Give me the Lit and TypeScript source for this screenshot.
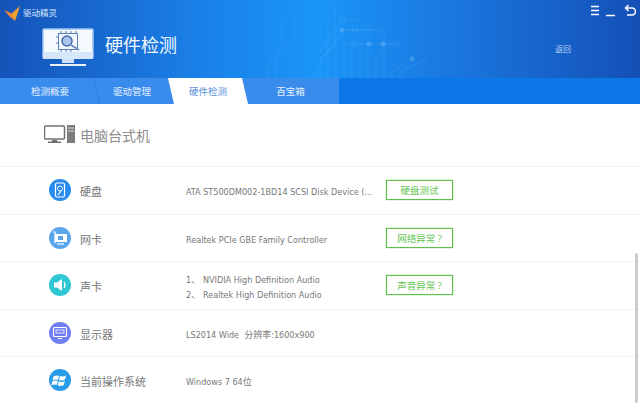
import { LitElement, html, css, svg } from "lit";
import { customElement } from "lit/decorators.js";

const circuit = svg`<g fill="none" stroke="#9ad2ff" stroke-opacity=".13" stroke-width="1">
<path d="M268 78V62L282 48V20"/><path d="M276 78V58L296 38V16"/><path d="M320 78V60L335 45V8"/><path d="M328 78V20"/><path d="M336 78V30"/><path d="M344 78V44H368"/><path d="M352 78V44"/><path d="M360 78V44"/><path d="M368 78V44H398"/><path d="M376 78V58L392 44"/><path d="M384 78V30H368"/><path d="M392 78V72L412 58"/><path d="M400 78V72L428 58"/><path d="M320 60L345 30H364"/><path d="M345 30H372"/><path d="M320 52L342 20H360"/>
<circle cx="342" cy="20" r="3"/><circle cx="355" cy="30" r="3"/><circle cx="368" cy="30" r="3"/><circle cx="355" cy="44" r="3"/><circle cx="397" cy="44" r="3"/></g>
<g fill="#9ad2ff" fill-opacity=".28"><circle cx="369" cy="44" r="2.5"/><circle cx="383" cy="44" r="2.5"/><circle cx="412" cy="59" r="2.5"/><circle cx="342" cy="30" r="2.5"/></g>`;

const logo = html`<svg class="logo" width="19" height="20" viewBox="0 0 19 20"><path d="M1 8L8 11L12 19L6 14Z" fill="#e8843a"/><path d="M8 12L17 4L12 19Z" fill="#f0a030"/></svg>`;

const monitor = html`<svg width="52" height="40" viewBox="0 0 52 40">
<rect x="1" y="1" width="50" height="29" rx="1" fill="#f4f8ff" stroke="#9cc3f2" stroke-width="1.5"/>
<rect x="1" y="24" width="50" height="7" fill="#d6e6fb"/>
<rect x="20" y="31" width="12" height="4" fill="#cfe1f8"/><rect x="8" y="36" width="36" height="2" fill="#e8f2ff"/>
<rect x="16.500" y="5.500" width="19" height="16" fill="none" stroke="#5d7fb8"/>
<path d="M19 3v2M24 3v2M29 3v2M34 3v2M19 22v2M24 22v2M29 22v2M14 9h2M14 15h2" stroke="#5d7fb8" stroke-width="1"/>
<circle cx="25" cy="13" r="5" fill="#a9c4ea" stroke="#456aa8" stroke-width="1.500"/><path d="M29 17l8 5" stroke="#6e8fc4" stroke-width="2"/>
</svg>`;

const pc = html`<svg width="36" height="20" viewBox="0 0 36 20">
<rect x="0.500" y="1" width="20" height="13" rx="1" fill="none" stroke="#707070" stroke-width="1.500"/>
<path d="M8 15h5v1.500h4V18H4v-1.500h4z" fill="#707070"/>
<rect x="23" y="0" width="8" height="18" fill="#7c7c7c"/><path d="M24 3h6M24 6h6" stroke="#ddd"/></svg>`;

const icons = {
  disk: html`<svg width="22" height="22" viewBox="0 0 22 22"><circle cx="11" cy="11" r="11" fill="#2a8bee"/><rect x="6.500" y="4" width="9" height="14" rx="1.500" fill="none" stroke="#fff" stroke-width="1.200"/><circle cx="11" cy="9.500" r="2.500" fill="none" stroke="#fff"/><path d="M9 16l3-4" stroke="#fff" stroke-width="1.200"/></svg>`,
  net: html`<svg width="22" height="22" viewBox="0 0 22 22"><circle cx="11" cy="11" r="11" fill="#5ba5ec"/><path d="M4 5h2v11" fill="none" stroke="#fff" stroke-width="1.200"/><rect x="6" y="7" width="12" height="8" fill="#fff"/><rect x="9" y="9" width="5" height="4" fill="#5ba5ec"/><path d="M8 17h7" stroke="#fff" stroke-width="1.200"/></svg>`,
  sound: html`<svg width="22" height="22" viewBox="0 0 22 22"><circle cx="11" cy="11" r="11" fill="#2fc6d4"/><path d="M5 8.500h3L13 5v12L8 13.500H5z" fill="#fff"/><path d="M15 8q2 3 0 6" fill="none" stroke="#fff" stroke-width="1.200"/></svg>`,
  display: html`<svg width="22" height="22" viewBox="0 0 22 22"><circle cx="11" cy="11" r="11" fill="#6f7ef0"/><rect x="4.500" y="5.500" width="13" height="9" rx="1" fill="none" stroke="#fff" stroke-width="1.200"/><rect x="7" y="8" width="8" height="3" fill="none" stroke="#fff" stroke-width=".8"/><path d="M9 16.500h4" stroke="#fff" stroke-width="1.200"/></svg>`,
  win: html`<svg width="22" height="22" viewBox="0 0 22 22"><circle cx="11" cy="11" r="11" fill="#2a9be8"/><path d="M4.500 7.500q3-1.500 5.500-.5l-1 4q-2.500-1-5.500.5zM11 7q3 1 6-.5l-1 4q-3 1.500-6 .5zM3.300 12.500q3-1.500 5.500-.5l-1 4q-2.500-1-5.500.5zM9.800 12.500q3 1 6-.5l-1 4q-3 1.500-6 .5z" fill="#fff"/></svg>`,
};

const rows = [
  { icon: icons.disk, name: "硬盘", lines: ["ATA ST500DM002-1BD14 SCSI Disk Device (..."], btn: "硬盘测试" },
  { icon: icons.net, name: "网卡", lines: ["Realtek PCIe GBE Family Controller"], btn: "网络异常 ?" },
  { icon: icons.sound, name: "声卡", lines: ["NVIDIA High Definition Audio", "Realtek High Definition Audio"], btn: "声音异常 ?", list: true },
  { icon: icons.display, name: "显示器", lines: ["LS2014 Wide  分辨率:1600x900"] },
  { icon: icons.win, name: "当前操作系统", lines: ["Windows 7 64位"] },
];

@customElement("app-root")
export class AppRoot extends LitElement {
  static styles = css`
    :host { display: block; width: 640px; height: 403px; overflow: hidden; background: #fff; font-family: "Open Sans", "Noto Sans CJK SC", sans-serif; position: relative; }
    .header { height: 78px; position: relative; background: linear-gradient(90deg, #1553b8 0%, #1a7fe6 30%, #1a96f8 50%, #1a78e0 70%, #1450b6 100%); display: flex; flex-direction: column; color: #fff; }
    .circuit { position: absolute; left: 0; top: 0; }
    .brand { display: flex; align-items: center; height: 24px; padding-left: 3px; gap: 1px; font-size: 8.500px; color: #dcecff; position: relative; }
    .ctrl { position: absolute; right: 4px; top: 3px; }
    .title-row { display: flex; align-items: flex-start; position: relative; padding-left: 42px; margin-top: 4px; }
    .title { margin-left: 11px; margin-top: 4px; font-size: 18px; line-height: 26px; color: #f2f8ff; }
    .back { position: absolute; left: 555px; top: 15px; font-size: 8px; line-height: 12px; color: #b8d6f8; }
    .tabs { height: 26px; background: #0c78e8; display: flex; position: relative; }
    .tab { height: 26px; position: relative; display: flex; align-items: center; justify-content: center; font-size: 9.500px; color: #e6f1ff; }
    .tab.first { width: 96px; padding-left: 4px; box-sizing: border-box; }
    .tab.second { width: 72px; }
    .tab.active { width: 80px; background: #fff; color: #5b8fd8; clip-path: polygon(0 0, 74px 0, 80px 100%, 6px 100%); }
    .tab.last { width: 91px; padding-right: 6px; box-sizing: border-box; }
    .bg { position: absolute; left: 0; top: 0; width: 339px; height: 26px; background: #3a8cec; }
    .slash { position: absolute; left: 93px; top: 0; }
    .body { padding-top: 21px; }
    .pc { display: flex; align-items: center; height: 20px; padding-left: 44px; font-size: 14px; color: #8c8c8c; margin-bottom: 21px; }
    .row { height: 47.500px; box-sizing: border-box; border-top: 1px solid #f4f4f4; display: flex; align-items: center; padding-left: 49px; }
    .name { width: 106px; margin-left: 9px; padding-top: 2px; font-size: 11px; color: #777; white-space: nowrap; flex: none; }
    .info { width: 200px; flex: none; padding-top: 5px; font-size: 9px; color: #777; line-height: 15px; white-space: pre; font-family: "DejaVu Sans Condensed", "Noto Sans CJK SC", sans-serif; }
    .info div { display: flex; }
    .num { width: 17px; }
    .btn { box-sizing: border-box; width: 67px; height: 20px; border: 1px solid #5dc24a; box-shadow: 0 0 1px #5dc24a; color: #66c455; font-size: 9.500px; display: flex; align-items: center; justify-content: center; }
    .scroll { position: absolute; right: 2px; top: 253px; width: 3px; height: 150px; background: #ccc; border-radius: 2px; }
  `;

  render() {
    return html`
      <div class="header">
        <svg class="circuit" width="640" height="78">${circuit}</svg>
        <div class="brand">${logo}<span>驱动精灵</span></div>
        <svg class="ctrl" width="46" height="14" viewBox="0 0 46 14" fill="none" stroke="#fff" stroke-width="1.500">
          <path d="M1 3.500h8M1 7.500h8M1 11.500h8"/><path d="M16 12.500h9"/><path d="M36 5h6a3.500 3.500 0 0 1 0 7h-5M38.500 2L35.500 5l3 3"/>
        </svg>
        <div class="title-row">${monitor}<div class="title">硬件检测</div><div class="back">返回</div></div>
      </div>
      <div class="tabs">
        <div class="bg"></div>
        <div class="tab first">检测概要</div>
        <div class="tab second">驱动管理</div>
        <div class="tab active">硬件检测</div>
        <div class="tab last">百宝箱</div>
        <svg class="slash" width="8" height="26"><path d="M0 0L7 26" stroke="#2f7edc" stroke-width="1"/></svg>
      </div>
      <div class="body">
        <div class="pc">${pc}<span>电脑台式机</span></div>
        ${rows.map(r => html`<div class="row">
          ${r.icon}
          <div class="name">${r.name}</div>
          <div class="info">${r.lines.map((l, i) => html`<div>${r.list ? html`<span class="num">${i + 1}、</span>` : ""}<span>${l}</span></div>`)}</div>
          ${r.btn ? html`<div class="btn">${r.btn}</div>` : ""}
        </div>`)}
      </div>
      <div class="scroll"></div>
    `;
  }
}
